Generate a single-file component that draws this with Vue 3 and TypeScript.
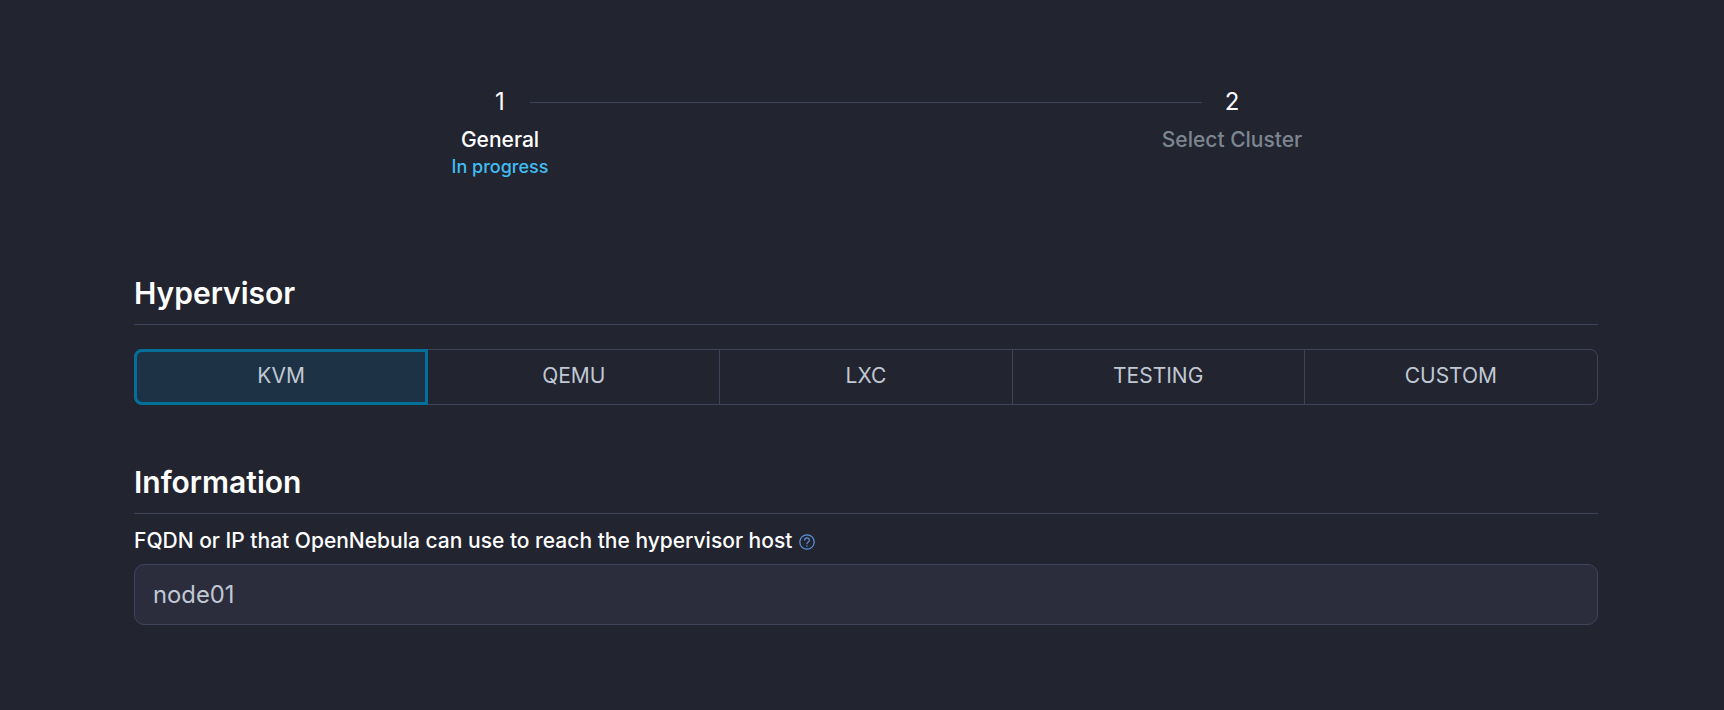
<script setup lang="ts">
const hypervisors: string[] = ['KVM', 'QEMU', 'LXC', 'TESTING', 'CUSTOM']
</script>

<template>
  <div class="page">
    <div class="stepper">
      <div class="step">
        <div class="num">1</div>
        <div class="title">General</div>
        <div class="status">In progress</div>
      </div>
      <div class="connector"></div>
      <div class="step">
        <div class="num">2</div>
        <div class="title muted">Select Cluster</div>
      </div>
    </div>

    <section class="hyper">
      <h2>Hypervisor</h2>
      <div class="segments">
        <button v-for="(h, i) in hypervisors" :key="h" class="seg" :class="{ active: i === 0 }">{{ h }}</button>
      </div>
    </section>

    <section class="info">
      <h2>Information</h2>
      <label class="label">
        FQDN or IP that OpenNebula can use to reach the hypervisor host
        <svg class="help" viewBox="0 0 16 16" width="16" height="16" fill="none" stroke="#5c94dc" stroke-width="1.2">
          <circle cx="8" cy="8" r="7.2" />
          <path d="M5.7 6.1a2.3 2.3 0 0 1 4.6.3c0 1.6-2.3 1.8-2.3 3.4" stroke-linecap="round" />
          <circle cx="8" cy="12" r=".7" fill="#5c94dc" stroke="none" />
        </svg>
      </label>
      <div class="input">node01</div>
    </section>
  </div>
</template>

<style>
html, body { margin: 0; background: #222430; }
</style>

<style scoped>
.page {
  box-sizing: border-box;
  width: 1724px;
  height: 710px;
  padding: 88px 126px 0 134px;
  background: #222430;
  font-family: Inter, "Liberation Sans", sans-serif;
  overflow: hidden;
}
.stepper {
  display: flex;
  align-items: flex-start;
  padding: 0 336px;
  height: 98px;
}
.step {
  width: 188px;
  margin: 0 -64px;
  text-align: center;
}
.connector {
  flex: 1;
  height: 1px;
  margin: 14px 0 0;
  background: #40435c;
}
.num { font-size: 24px; line-height: 28px; color: #fff; }
.title { font-size: 21px; font-weight: 500; line-height: 28px; margin-top: 10px; color: #fff; }
.title.muted { color: #7c8691; }
.status { font-size: 18px; line-height: 26px; color: #40bdf2; font-weight: 500; }
h2 {
  margin: 0;
  font-size: 30px;
  line-height: 35px;
  font-weight: 600;
  color: #fff;
  padding-bottom: 13px;
  border-bottom: 1px solid #40435c;
}
.hyper { margin-top: 90px; }
.segments {
  display: grid;
  grid-template-columns: repeat(4, 292.2px) 1fr;
  margin-top: 24px;
  height: 56px;
  border: 1px solid #40435c;
  border-radius: 8px;
  box-sizing: border-box;
}
.seg {
  background: transparent;
  border: 0;
  border-left: 1px solid #40435c;
  color: #c0c8d4;
  font: 400 21px Inter, sans-serif;
  padding: 0 0 3px;
}
.seg:first-child { border-left: 0; }
.seg.active {
  position: relative;
  background: #1e3246;
  margin: -1px -1px -1px -1px;
  border: 3px solid #02709a;
  border-radius: 8px 0 0 8px;
}
.info { margin-top: 60px; }
.label {
  display: block;
  margin-top: 13px;
  font-size: 21px;
  line-height: 28px;
  font-weight: 500;
  color: #fff;
}
.help { vertical-align: -2px; margin-left: 1px; }
.input {
  box-sizing: border-box;
  margin-top: 9px;
  height: 61px;
  padding: 0 18px;
  line-height: 59px;
  font-size: 23.8px;
  color: #c0c8d4;
  background: #2b2d3d;
  border: 1px solid #40435c;
  border-radius: 10px;
}
</style>
